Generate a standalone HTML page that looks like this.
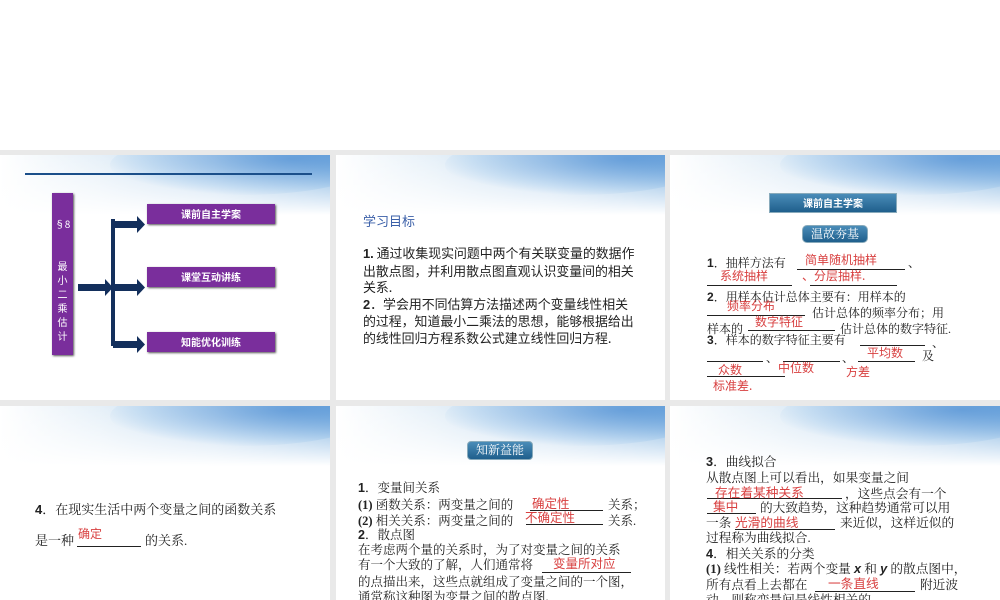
<!DOCTYPE html>
<html><head><meta charset="utf-8"><style>
*{margin:0;padding:0;box-sizing:border-box}
body{width:1000px;height:600px;background:#fff;position:relative;overflow:hidden;font-family:"Liberation Serif","Noto Serif CJK SC","Noto Sans CJK SC",serif;color:#222}
.bg{position:absolute;left:0;top:150px;width:1000px;height:450px;background:#e9e9e9}
.s{position:absolute;background:#fff;overflow:hidden}
.sw{position:absolute;left:0;top:0;width:100%;height:60px;background:linear-gradient(180deg,rgba(255,255,255,0) 0%,#fff 100%),linear-gradient(90deg,#fff 0%,#e6f0f8 30%,#bcd6ee 65%,#6fa8dc 100%)}
.sw2{position:absolute;right:-40px;top:-20px;width:260px;height:60px;border-radius:50%;background:radial-gradient(ellipse at 70% 40%,rgba(90,150,215,.75),rgba(150,195,235,.3) 60%,rgba(255,255,255,0) 75%)}
.a{position:absolute;white-space:nowrap;font-size:12px;line-height:16px}
.r{color:#d84040;font-family:"Noto Sans CJK SC",sans-serif}
.b{font-family:"Liberation Sans",sans-serif;font-weight:bold}
.u{position:absolute;border-bottom:1px solid #222;height:1px}
.pb{position:absolute;background:#7a2e9c;color:#fff;font-family:"Noto Sans CJK SC",sans-serif;font-size:10px;font-weight:bold;text-align:center;line-height:20px;box-shadow:1px 1px 2px #555}
.btn{position:absolute;border-radius:4px;background:linear-gradient(#4a8cb8,#1f5f8c);color:#fff;font-size:12px;text-align:center;border:1px solid #8ab}
.p5 .a{font-size:12.5px}
.p6 .a{font-size:12.7px}
</style></head><body>
<div class="bg"></div>

<!-- slide 1 -->
<div class="s" style="left:0;top:155px;width:330px;height:245px">
<div class="sw"></div><div class="sw2"></div>
<div style="position:absolute;left:25px;top:18px;width:287px;height:2px;background:#1b4f8a"></div>
<div class="pb" style="left:52px;top:38px;width:21px;height:162px;line-height:14px;font-weight:normal;padding-top:24px">§8<br><br><br>最<br>小<br>二<br>乘<br>估<br>计</div>
<svg style="position:absolute;left:75px;top:50px" width="75" height="150">
<rect x="3" y="79" width="27" height="7" fill="#132f5c"/><polygon points="30,74 38,82.5 30,91" fill="#132f5c"/>
<rect x="36" y="14" width="4" height="127" fill="#132f5c"/>
<rect x="38" y="16" width="24" height="7" fill="#132f5c"/><polygon points="62,11 70,19.5 62,28" fill="#132f5c"/>
<rect x="38" y="79" width="24" height="7" fill="#132f5c"/><polygon points="62,74 70,82.5 62,91" fill="#132f5c"/>
<rect x="38" y="136" width="24" height="7" fill="#132f5c"/><polygon points="62,131 70,139.5 62,148" fill="#132f5c"/>
</svg>
<div class="pb" style="left:147px;top:49px;width:128px;height:20px">课前自主学案</div>
<div class="pb" style="left:147px;top:112px;width:128px;height:20px">课堂互动讲练</div>
<div class="pb" style="left:147px;top:177px;width:128px;height:20px">知能优化训练</div>
</div>

<!-- slide 2 -->
<div class="s" style="left:336px;top:155px;width:329px;height:245px">
<div class="sw"></div><div class="sw2"></div>
<div class="a" style="left:27px;top:58px;font-size:13px;color:#3a5fa8;font-family:'Noto Sans CJK SC',sans-serif">学习目标</div>
<div class="a" style="left:27px;top:90px;font-size:12.9px;line-height:16.5px;font-family:'Noto Sans CJK SC',sans-serif"><span class="b">1.</span> 通过收集现实问题中两个有关联变量的数据作<br>出散点图，并利用散点图直观认识变量间的相关<br>关系.<br><span class="b">2</span>．学会用不同估算方法描述两个变量线性相关<br>的过程，知道最小二乘法的思想，能够根据给出<br>的线性回归方程系数公式建立线性回归方程.</div>
</div>

<!-- slide 3 -->
<div class="s" style="left:670px;top:155px;width:330px;height:245px">
<div class="sw"></div><div class="sw2"></div>
<div class="btn" style="left:99px;top:38px;width:128px;height:20px;border-radius:0;font-size:10px;font-weight:bold;line-height:18px;font-family:'Noto Sans CJK SC',sans-serif">课前自主学案</div>
<div class="btn" style="left:132px;top:70px;width:66px;height:18px;line-height:16px;border-radius:5px">温故夯基</div>
<div class="a" style="left:37px;top:100px"><span class="b">1</span>．抽样方法有</div>
<div class="a" style="left:238px;top:100px">、</div>
<div class="a" style="left:37px;top:134px"><span class="b">2</span>．用样本估计总体主要有：用样本的</div>
<div class="a" style="left:142px;top:150px">估计总体的频率分布；用</div>
<div class="a" style="left:37px;top:166px">样本的</div>
<div class="a" style="left:170px;top:166px">估计总体的数字特征.</div>
<div class="a" style="left:37px;top:177px"><span class="b">3</span>．样本的数字特征主要有</div>
<div class="a" style="left:262px;top:180px">、</div>
<div class="a" style="left:96px;top:195px">、</div>
<div class="a" style="left:172px;top:195px">、</div>
<div class="a" style="left:252px;top:193px">及</div>
<div class="u" style="left:127px;top:114px;width:108px"></div>
<div class="u" style="left:37px;top:130px;width:85px"></div>
<div class="u" style="left:140px;top:130px;width:87px"></div>
<div class="u" style="left:37px;top:160px;width:98px"></div>
<div class="u" style="left:78px;top:175px;width:87px"></div>
<div class="u" style="left:190px;top:190px;width:65px"></div>
<div class="u" style="left:37px;top:206px;width:56px"></div>
<div class="u" style="left:113px;top:206px;width:57px"></div>
<div class="u" style="left:188px;top:206px;width:57px"></div>
<div class="u" style="left:37px;top:221px;width:78px"></div>
<div class="a r" style="left:135px;top:97px">简单随机抽样</div>
<div class="a r" style="left:50px;top:113px">系统抽样</div>
<div class="a r" style="left:132px;top:113px">、分层抽样.</div>
<div class="a r" style="left:57px;top:143px">频率分布</div>
<div class="a r" style="left:85px;top:159px">数字特征</div>
<div class="a r" style="left:197px;top:190px">平均数</div>
<div class="a r" style="left:48px;top:207px">众数</div>
<div class="a r" style="left:108px;top:205px">中位数</div>
<div class="a r" style="left:176px;top:209px">方差</div>
<div class="a r" style="left:43px;top:223px">标准差.</div>
</div>

<!-- slide 4 -->
<div class="s" style="left:0;top:406px;width:330px;height:194px">
<div class="sw"></div><div class="sw2"></div>
<div class="a" style="left:35px;top:96px;font-size:13px"><span class="b">4</span>．在现实生活中两个变量之间的函数关系</div>
<div class="a" style="left:35px;top:127px;font-size:13px">是一种</div>
<div class="a" style="left:145px;top:127px;font-size:13px">的关系.</div>
<div class="u" style="left:77px;top:140px;width:64px"></div>
<div class="a r" style="left:78px;top:120px">确定</div>
</div>

<!-- slide 5 -->
<div class="s p5" style="left:336px;top:406px;width:329px;height:194px">
<div class="sw"></div><div class="sw2"></div>
<div class="btn" style="left:131px;top:35px;width:66px;height:19px;line-height:17px">知新益能</div>
<div class="a" style="left:22px;top:74px"><span class="b">1</span>．变量间关系</div>
<div class="a" style="left:22px;top:91px"><b>(1)</b> 函数关系：两变量之间的</div>
<div class="a" style="left:272px;top:91px">关系；</div>
<div class="a" style="left:22px;top:107px"><b>(2)</b> 相关关系：两变量之间的</div>
<div class="a" style="left:272px;top:107px">关系.</div>
<div class="a" style="left:22px;top:121px"><span class="b">2</span>．散点图</div>
<div class="a" style="left:22px;top:136px">在考虑两个量的关系时，为了对变量之间的关系</div>
<div class="a" style="left:22px;top:151px">有一个大致的了解，人们通常将</div>
<div class="a" style="left:22px;top:168px">的点描出来，这些点就组成了变量之间的一个图，</div>
<div class="a" style="left:22px;top:183px">通常称这种图为变量之间的散点图.</div>
<div class="u" style="left:194px;top:104px;width:73px"></div>
<div class="u" style="left:190px;top:118px;width:77px"></div>
<div class="u" style="left:206px;top:166px;width:89px"></div>
<div class="a r" style="left:196px;top:89px">确定性</div>
<div class="a r" style="left:189px;top:103px">不确定性</div>
<div class="a r" style="left:217px;top:149px">变量所对应</div>
</div>

<!-- slide 6 -->
<div class="s p6" style="left:670px;top:406px;width:330px;height:194px">
<div class="sw"></div><div class="sw2"></div>
<div class="a" style="left:36px;top:48px"><span class="b">3</span>．曲线拟合</div>
<div class="a" style="left:36px;top:64px">从散点图上可以看出，如果变量之间</div>
<div class="a" style="left:175px;top:80px">，这些点会有一个</div>
<div class="a" style="left:90px;top:94px">的大致趋势，这种趋势通常可以用</div>
<div class="a" style="left:36px;top:109px">一条</div>
<div class="a" style="left:170px;top:109px">来近似，这样近似的</div>
<div class="a" style="left:36px;top:124px">过程称为曲线拟合.</div>
<div class="a" style="left:36px;top:140px"><span class="b">4</span>．相关关系的分类</div>
<div class="a" style="left:36px;top:155px"><b>(1)</b> 线性相关：若两个变量 <i class="b">x</i> 和 <i class="b">y</i> 的散点图中，</div>
<div class="a" style="left:36px;top:171px">所有点看上去都在</div>
<div class="a" style="left:250px;top:171px">附近波</div>
<div class="a" style="left:36px;top:186px">动，则称变量间是线性相关的.</div>
<div class="u" style="left:37px;top:92px;width:135px"></div>
<div class="u" style="left:37px;top:107px;width:49px"></div>
<div class="u" style="left:65px;top:123px;width:100px"></div>
<div class="u" style="left:145px;top:185px;width:100px"></div>
<div class="a r" style="left:45px;top:78px">存在着某种关系</div>
<div class="a r" style="left:43px;top:92px">集中</div>
<div class="a r" style="left:65px;top:108px">光滑的曲线</div>
<div class="a r" style="left:158px;top:169px">一条直线</div>
</div>
</body></html>
